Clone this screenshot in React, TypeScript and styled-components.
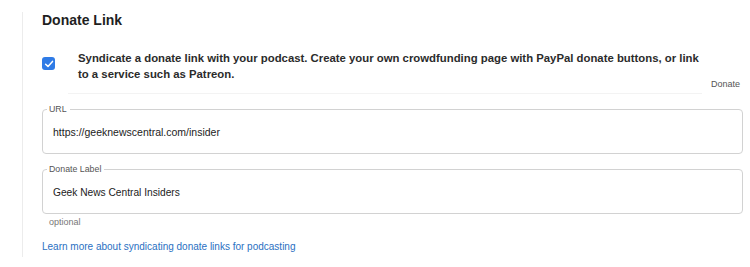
import React from 'react';
import styled, { createGlobalStyle } from 'styled-components';

const GlobalStyle = createGlobalStyle`
  html, body {
    margin: 0;
    padding: 0;
    background: #fff;
  }
  body {
    font-family: "Liberation Sans", Arial, Helvetica, sans-serif;
    color: #222;
  }
`;

const Page = styled.div`
  width: 750px;
  height: 267px;
  padding: 12px 7px 10px 22px;
  box-sizing: border-box;
  overflow: hidden;
`;

const Section = styled.section`
  border-left: 1px solid #ececec;
  padding-left: 19px;
  height: 100%;
  box-sizing: border-box;
`;

const Heading = styled.h2`
  margin: 0;
  font-size: 14px;
  font-weight: 700;
  line-height: 16px;
  color: #1f1f1f;
`;

const CheckRow = styled.div`
  display: flex;
  align-items: flex-start;
  margin-top: 22px;
`;

const Box = styled.span`
  flex: none;
  width: 13px;
  height: 13px;
  margin-top: 7px;
  border-radius: 3px;
  background: #2f7be6;
  display: flex;
  align-items: center;
  justify-content: center;
`;

const Describe = styled.div`
  flex: 1;
  margin-left: 13px;
  margin-right: 41px;
  padding: 0 0 11px 10px;
  border-bottom: 1px solid #f3f3f3;
`;

const Lead = styled.p`
  margin: 0;
  font-size: 11.35px;
  font-weight: 700;
  line-height: 16px;
  color: #2b2b2b;
`;

const Aside = styled.div`
  text-align: right;
  font-size: 9px;
  color: #555;
  margin-top: -16px;
  padding-right: 3px;
  line-height: 12px;
`;

const Field = styled.fieldset<{ $top: number }>`
  margin: ${(p) => p.$top}px 0 0;
  padding: 0 10px;
  height: 50px;
  box-sizing: border-box;
  border: 1px solid #d2d2d2;
  border-radius: 4px;
  display: flex;
  align-items: center;
`;

const Legend = styled.legend`
  margin-left: -6px;
  padding: 0 3px 0 2px;
  font-size: 8.8px;
  line-height: 10px;
  color: #555;
`;

const Value = styled.div<{ $size: number }>`
  font-size: ${(p) => p.$size}px;
  color: #222;
  margin-top: -3px;
`;

const Hint = styled.div`
  font-size: 9px;
  line-height: 11px;
  color: #777;
  margin: 3px 0 0 7px;
`;

const LearnLink = styled.a`
  display: block;
  margin-top: 13px;
  font-size: 10px;
  line-height: 12px;
  color: #2a70c2;
  text-decoration: none;
`;

const Check = () => (
  <svg width="10" height="10" viewBox="0 0 10 10" fill="none">
    <path d="M1.6 5.2 L4 7.4 L8.5 2.4" stroke="#fff" strokeWidth="1.5" strokeLinecap="round" strokeLinejoin="round" />
  </svg>
);

export default function App() {
  return (
    <Page>
      <GlobalStyle />
      <Section>
        <Heading>Donate Link</Heading>
        <CheckRow>
          <Box>
            <Check />
          </Box>
          <Describe>
            <Lead>
              Syndicate a donate link with your podcast. Create your own crowdfunding page with PayPal donate buttons, or link
              to a service such as Patreon.
            </Lead>
          </Describe>
        </CheckRow>
        <Aside>Donate</Aside>
        <Field $top={14}>
          <Legend>URL</Legend>
          <Value $size={10.5}>https://geeknewscentral.com/insider</Value>
        </Field>
        <Field $top={10}>
          <Legend>Donate Label</Legend>
          <Value $size={10.2}>Geek News Central Insiders</Value>
        </Field>
        <Hint>optional</Hint>
        <LearnLink href="#">Learn more about syndicating donate links for podcasting</LearnLink>
      </Section>
    </Page>
  );
}
